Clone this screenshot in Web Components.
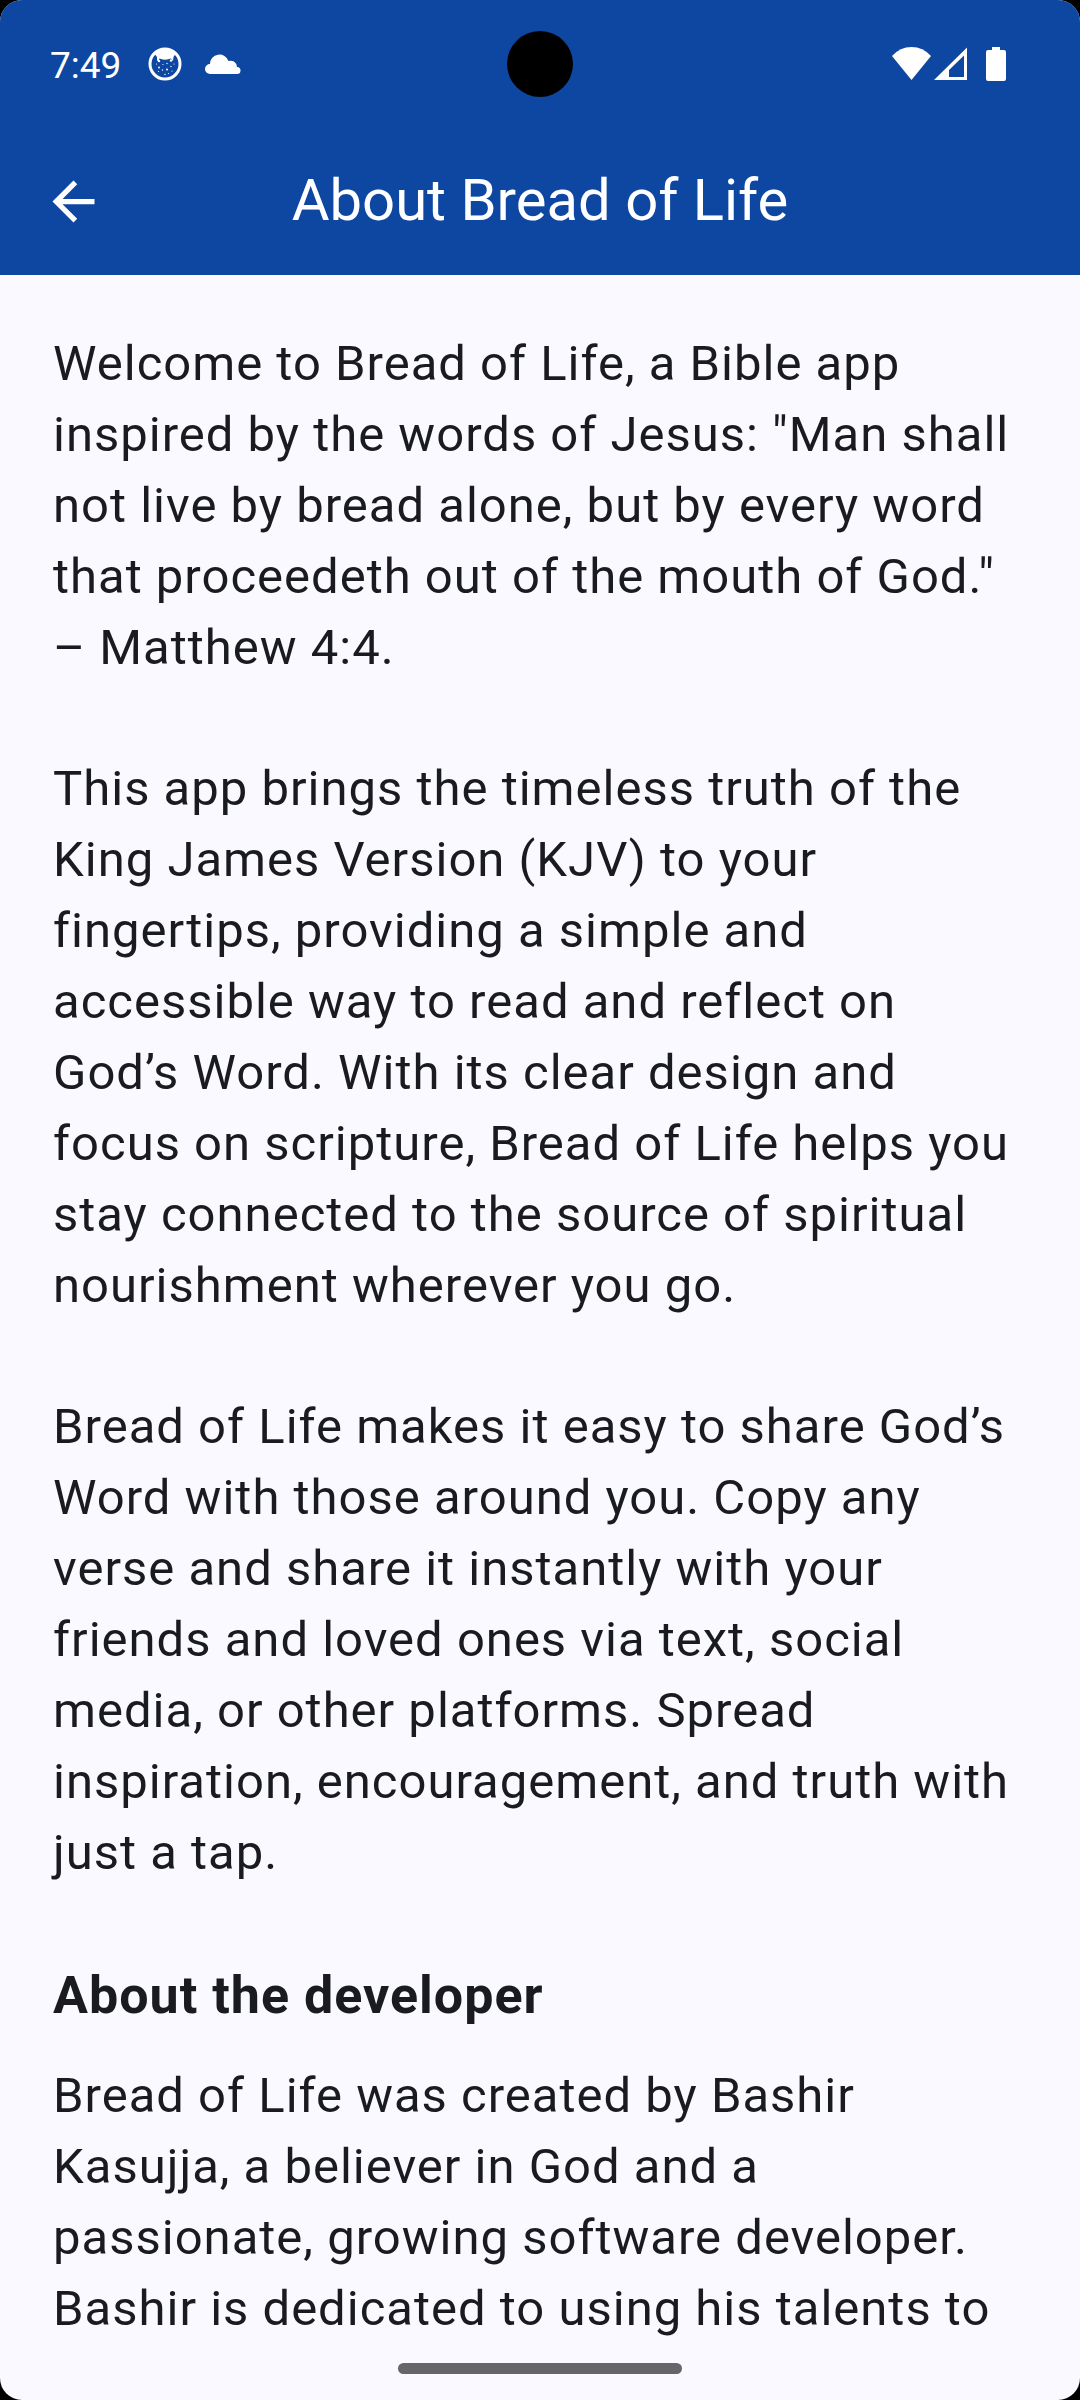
<!DOCTYPE html>
<html lang="en">
<head>
<meta charset="utf-8">
<meta name="viewport" content="width=device-width, initial-scale=1">
<title>About Bread of Life</title>
<style>
  html { background: #000; }
  body { margin: 0; font-family: Roboto, "Noto Sans", sans-serif; }
</style>
</head>
<body>
<phone-screen>
  <status-bar slot="top" time="7:49"></status-bar>
  <app-bar slot="top">About Bread of Life</app-bar>
  <about-article>
    <p>Welcome to Bread of Life, a Bible app inspired by the words of Jesus: "Man shall not live by bread alone, but by every word that proceedeth out of the mouth of God." – Matthew 4:4.</p>
    <p>This app brings the timeless truth of the King James Version (KJV) to your fingertips, providing a simple and accessible way to read and reflect on God’s Word. With its clear design and focus on scripture, Bread of Life helps you stay connected to the source of spiritual nourishment wherever you go.</p>
    <p>Bread of Life makes it easy to share God’s Word with those around you. Copy any verse and share it instantly with your friends and loved ones via text, social media, or other platforms. Spread inspiration, encouragement, and truth with just a tap.</p>
    <h2>About the developer</h2>
    <p>Bread of Life was created by Bashir Kasujja, a believer in God and a passionate, growing software developer. Bashir is dedicated to using his talents to</p>
  </about-article>
  <gesture-bar slot="bottom"></gesture-bar>
</phone-screen>

<script>
const define = (name, html, setup) => {
  const template = document.createElement('template');
  template.innerHTML = html;
  customElements.define(name, class extends HTMLElement {
    constructor() {
      super();
      this.attachShadow({ mode: 'open' }).append(template.content.cloneNode(true));
    }
    connectedCallback() { if (setup) setup(this, this.shadowRoot); }
  });
};

define('phone-screen', `
  <style>
    :host {
      display: flex; flex-direction: column; height: 100vh; overflow: hidden;
      background: #f9f9ff; color: #1a1b20; border-radius: 22px;
    }
    main { flex: 1; min-height: 0; overflow: hidden; }
  </style>
  <slot name="top"></slot>
  <main><slot></slot></main>
  <slot name="bottom"></slot>
`);

define('status-bar', `
  <style>
    :host {
      display: grid; grid-template-columns: 1fr auto 1fr; align-items: center;
      height: 128px; padding: 0 74px 0 50px; box-sizing: border-box;
      background: #0d47a1; color: #fff; font-size: 37px; line-height: 44px;
    }
    .left, .right { display: flex; align-items: center; }
    .left { gap: 26px; }
    .right { justify-content: flex-end; }
    time { padding-top: 4px; }
    .camera { width: 66px; height: 66px; border-radius: 50%; background: #000; margin-left: 24px; }
    svg { display: block; fill: currentColor; }
    .cloud { margin-left: -4px; }
    .signal { margin: 0 19px 0 3px; }
  </style>
  <div class="left">
    <time></time>
    <svg width="36" height="36" viewBox="0 0 36 36" aria-hidden="true">
      <circle cx="18" cy="18" r="15" fill="none" stroke="#fff" stroke-width="3"/>
      <path d="M7 7Q18-2 29 7L26.500 11 26 15 24 12.500 22 13Q18 14.500 14 13L12.500 12.500 11 15.500 10 14 10 11Z"/>
      <circle cx="12" cy="15" r="1.200"/><circle cx="24" cy="14.500" r="1.200"/>
      <circle cx="9.500" cy="18" r=".6"/><circle cx="12" cy="21.500" r=".9"/>
      <circle cx="16" cy="18.500" r=".6"/><circle cx="20" cy="17.500" r=".7"/>
      <circle cx="27" cy="18" r=".6"/><circle cx="24" cy="20.500" r=".7"/>
      <circle cx="20" cy="23.500" r="1"/><circle cx="15.500" cy="24" r=".7"/>
      <circle cx="11.500" cy="25.500" r=".6"/><circle cx="25" cy="25" r=".6"/>
      <circle cx="18" cy="28.500" r=".7"/><circle cx="21.500" cy="27.500" r=".6"/>
    </svg>
    <svg class="cloud" width="36" height="20" viewBox="0 0 36 20" aria-hidden="true">
      <path d="M5 20A5 5 0 0 1 5 10A9.500 9.500 0 0 1 23.500 7A6.500 6.500 0 0 1 32 13A3.500 3.500 0 0 1 32 20Z"/>
    </svg>
  </div>
  <div class="camera"></div>
  <div class="right">
    <svg width="39" height="34" viewBox="0 0 39 34" aria-hidden="true">
      <path d="M0 9Q8 0 19.500 0T39 9L19.500 33Z"/>
    </svg>
    <svg class="signal" width="33" height="34" viewBox="0 0 33 34" aria-hidden="true">
      <path fill-rule="evenodd" d="M0 33L33 .5V33ZM15 30H30V8.500L15 23Z"/>
    </svg>
    <svg width="20" height="34" viewBox="0 0 20 34" aria-hidden="true">
      <path d="M6 0H14V3H18Q20 3 20 5V32Q20 34 18 34H2Q0 34 0 32V5Q0 3 2 3H6Z"/>
    </svg>
  </div>
`, (el, root) => { root.querySelector('time').textContent = el.getAttribute('time'); });

define('app-bar', `
  <style>
    :host {
      display: grid; grid-template-columns: 1fr auto 1fr; align-items: center;
      height: 147px; padding: 0 42px; box-sizing: border-box;
      background: #0d47a1; color: #fff;
    }
    button { justify-self: start; padding: 0; border: 0; background: none; color: inherit; }
    svg { display: block; width: 63px; height: 63px; fill: currentColor; }
    h1 { margin: 0; padding-bottom: 4px; font-size: 58px; line-height: 74px; font-weight: 400; }
  </style>
  <button type="button" aria-label="Back">
    <svg viewBox="0 0 24 24" aria-hidden="true"><path d="M20 11H7.830l5.590-5.590L12 4l-8 8 8 8 1.410-1.410L7.830 13H20z"/></svg>
  </button>
  <h1><slot></slot></h1>
`);

define('about-article', `
  <style>
    :host { display: block; padding: 53px; font-size: 49px; line-height: 71px; letter-spacing: 1px; }
    ::slotted(p) { margin: 0 0 70px; }
    ::slotted(h2) { margin: 0 0 27px; font-size: 52px; line-height: 75px; font-weight: 700; }
  </style>
  <slot></slot>
`);

define('gesture-bar', `
  <style>
    :host { display: flex; justify-content: center; align-items: center; height: 63px; }
    div { width: 284px; height: 11px; border-radius: 6px; background: #666668; }
  </style>
  <div></div>
`);
</script>
</body>
</html>
